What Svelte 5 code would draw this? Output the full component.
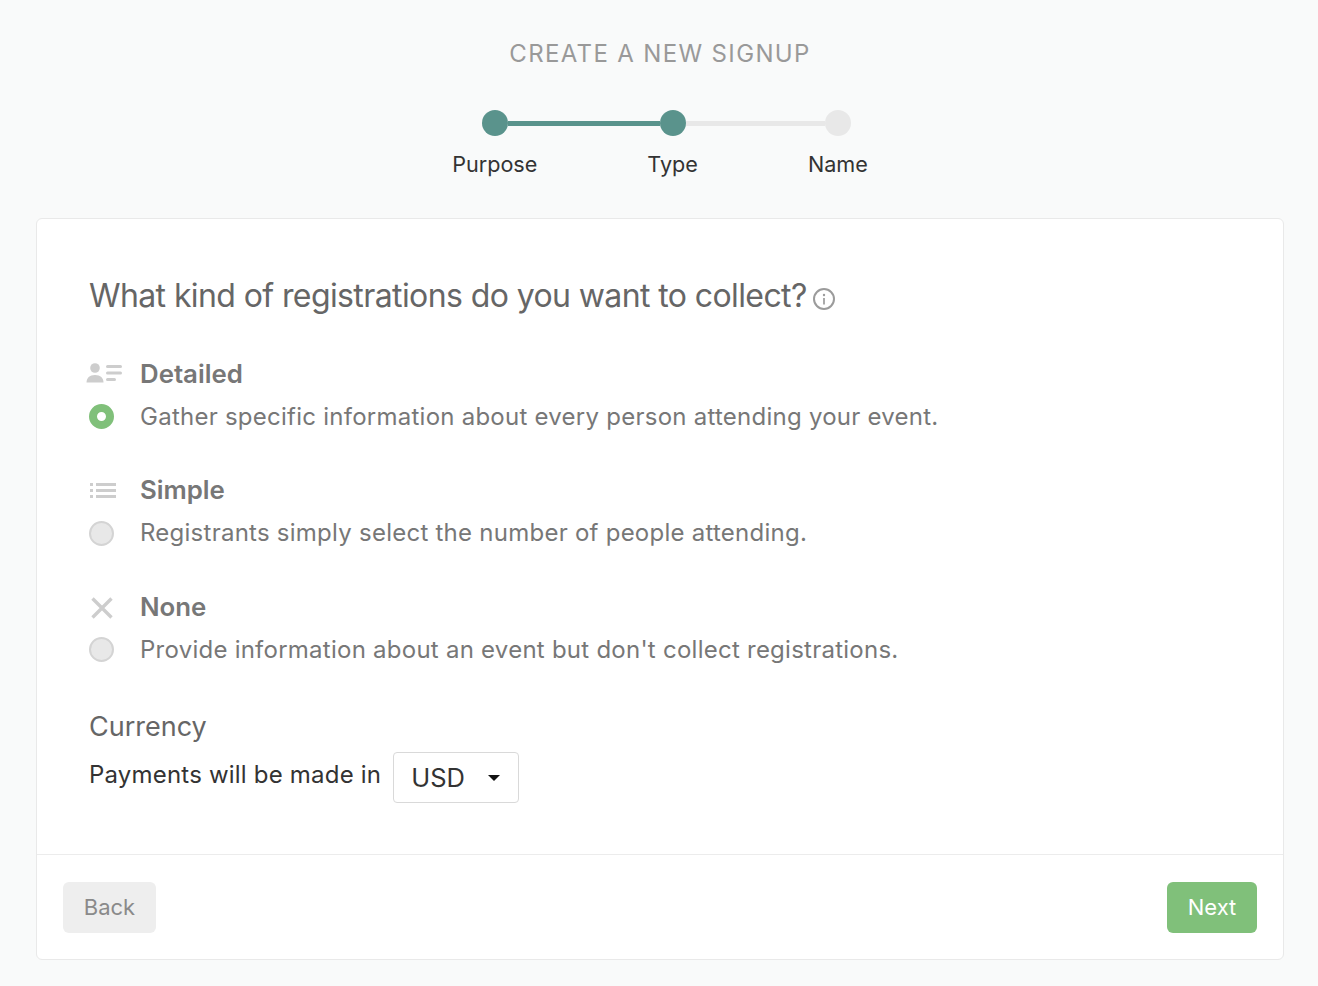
<script>
  const options = [
    { key: 'detailed', title: 'Detailed', desc: 'Gather specific information about every person attending your event.', on: true },
    { key: 'simple', title: 'Simple', desc: 'Registrants simply select the number of people attending.', on: false },
    { key: 'none', title: 'None', desc: "Provide information about an event but don't collect registrations.", on: false }
  ];
</script>

<div class="page">
  <h1 class="title">CREATE A NEW SIGNUP</h1>
  <div class="steps">
    <div class="step">
      <span class="dot on"><span class="link first"></span></span>
      <span class="label">Purpose</span>
    </div>
    <div class="step">
      <span class="dot on"><span class="link second"></span></span>
      <span class="label">Type</span>
    </div>
    <div class="step">
      <span class="dot"></span>
      <span class="label">Name</span>
    </div>
  </div>

  <div class="card">
    <div class="body">
      <h2 class="question">What kind of registrations do you want to collect?
        <svg class="info" width="22" height="22" viewBox="0 0 22 22" fill="none">
          <circle cx="11" cy="11" r="10" stroke="#9b9b9b" stroke-width="2"/>
          <circle cx="11" cy="7" r="1.2" fill="#9b9b9b"/>
          <path d="M11 10v6.500" stroke="#9b9b9b" stroke-width="1.7"/>
        </svg>
      </h2>

      {#each options as o}
        <div class="option">
          <div class="icon">
            {#if o.key === 'detailed'}
              <svg class="person" width="36" height="20" viewBox="0 0 36 20" fill="#cdcdcd">
                <circle cx="9" cy="5" r="4.800"/>
                <path d="M0.500 19.500c0-4.500 3-7.500 8.500-7.500s8.500 3 8.500 7.500z"/>
                <rect x="20" y="2" width="16" height="3" rx="1.500"/>
                <rect x="20" y="8.500" width="16" height="3" rx="1.500"/>
                <rect x="20" y="15" width="10" height="3" rx="1.500"/>
              </svg>
            {:else if o.key === 'simple'}
              <svg class="list" width="26" height="15" viewBox="0 0 26 15" fill="#cdcdcd">
                <rect x="0" y="0" width="3" height="3"/>
                <rect x="0" y="6" width="3" height="3"/>
                <rect x="0" y="12" width="3" height="3"/>
                <rect x="6" y="0" width="20" height="3"/>
                <rect x="6" y="6" width="20" height="3"/>
                <rect x="6" y="12" width="20" height="3"/>
              </svg>
            {:else}
              <svg width="22" height="22" viewBox="0 0 22 22" fill="none">
                <path d="M1.500 1.500l19 19M20.500 1.500l-19 19" stroke="#cdcdcd" stroke-width="3.400"/>
              </svg>
            {/if}
          </div>
          <div class="opt-title">{o.title}</div>
          <div class="radio-cell"><span class="radio" class:checked={o.on}></span></div>
          <div class="opt-desc">{o.desc}</div>
        </div>
      {/each}

      <h3 class="currency">Currency</h3>
      <div class="pay">
        <span class="pay-text">Payments will be made in</span>
        <div class="select">
          <span>USD</span>
          <span class="caret"></span>
        </div>
      </div>
    </div>
    <div class="footer">
      <button class="btn back">Back</button>
      <button class="btn next">Next</button>
    </div>
  </div>
</div>

<style>
  :global(body) {
    margin: 0;
    background: #f9fafa;
  }
  .page {
    box-sizing: border-box;
    height: 986px;
    padding: 39px 34px 0 36px;
    font-family: Inter, "Liberation Sans", sans-serif;
    overflow: hidden;
  }
  .title {
    margin: 0;
    text-align: center;
    font-weight: 400;
    font-size: 24px;
    line-height: 30px;
    letter-spacing: 1.35px;
    color: #999;
  }
  .steps {
    display: flex;
    justify-content: center;
    gap: 110px;
    margin-top: 41px;
  }
  .step {
    display: flex;
    flex-direction: column;
    align-items: center;
  }
  .dot {
    position: relative;
    width: 26px;
    height: 26px;
    border-radius: 50%;
    background: #e8e8e8;
  }
  .dot.on {
    background: #5a938c;
  }
  .link {
    position: absolute;
    left: 26px;
    top: 11px;
    height: 5px;
  }
  .link.first {
    width: 152px;
    background: #5a938c;
  }
  .link.second {
    width: 139px;
    background: #e8e8e8;
  }
  .label {
    margin-top: 15px;
    font-size: 21.6px;
    line-height: 26px;
    color: #333;
  }
  .card {
    box-sizing: border-box;
    height: 742px;
    margin-top: 41px;
    display: flex;
    flex-direction: column;
    background: #fff;
    border: 1px solid #e9e9e9;
    border-radius: 6px;
  }
  .body {
    flex: 1;
    padding: 57px 52px 0;
  }
  .question {
    margin: 0;
    display: flex;
    align-items: center;
    gap: 6px;
    font-weight: 400;
    font-size: 32px;
    line-height: 40px;
    letter-spacing: -0.6px;
    color: #666;
  }
  .info {
    flex: none;
    margin-top: 5px;
  }
  .option {
    display: grid;
    grid-template-columns: 51px 1fr;
    grid-template-rows: 30px 30px;
    row-gap: 12px;
    margin-bottom: 44.5px;
  }
  .option:first-of-type {
    margin-top: 43.6px;
  }
  .icon {
    display: flex;
    align-items: center;
    justify-content: center;
    width: 26px;
  }
  .icon svg {
    flex: none;
  }
  .person {
    margin-left: 4px;
    margin-top: -3px;
  }
  .list {
    margin-left: 2px;
    margin-top: -2px;
  }
  .opt-title {
    font-weight: 600;
    font-size: 25.8px;
    line-height: 28px;
    color: #777;
  }
  .radio-cell {
    display: flex;
    align-items: center;
  }
  .radio {
    box-sizing: border-box;
    width: 25px;
    height: 25px;
    border-radius: 50%;
    background: #e8e8e8;
    border: 2px solid #d4d4d4;
  }
  .radio.checked {
    background: #fff;
    border: 8px solid #80c07a;
  }
  .opt-desc {
    font-size: 24px;
    line-height: 30px;
    letter-spacing: 0.25px;
    color: #777;
  }
  .currency {
    margin: 0;
    padding-top: 1px;
    font-weight: 400;
    font-size: 27px;
    line-height: 34px;
    color: #666;
  }
  .pay {
    display: flex;
    align-items: center;
    gap: 12px;
    margin-top: 8px;
    font-size: 24px;
    letter-spacing: 0.2px;
    color: #333;
  }
  .pay-text {
    padding-bottom: 6px;
  }
  .select {
    box-sizing: border-box;
    width: 126px;
    height: 51px;
    padding: 0 18px 0 17px;
    display: flex;
    align-items: center;
    justify-content: space-between;
    border: 1px solid #d9d9d9;
    border-radius: 4px;
    font-size: 25.5px;
    letter-spacing: 0;
  }
  .caret {
    width: 0;
    height: 0;
    border-left: 6px solid transparent;
    border-right: 6px solid transparent;
    border-top: 6px solid #111;
  }
  .footer {
    height: 105px;
    box-sizing: border-box;
    padding: 27px 26px 0;
    display: flex;
    justify-content: space-between;
    align-items: flex-start;
    border-top: 1px solid #ececec;
  }
  .btn {
    height: 51px;
    padding: 0 0 2px;
    border: none;
    border-radius: 6px;
    font-family: inherit;
    font-size: 22px;
  }
  .back {
    width: 93px;
    background: #eee;
    color: #8a8a8a;
  }
  .next {
    width: 90px;
    background: #80c07a;
    color: #fff;
  }
</style>
